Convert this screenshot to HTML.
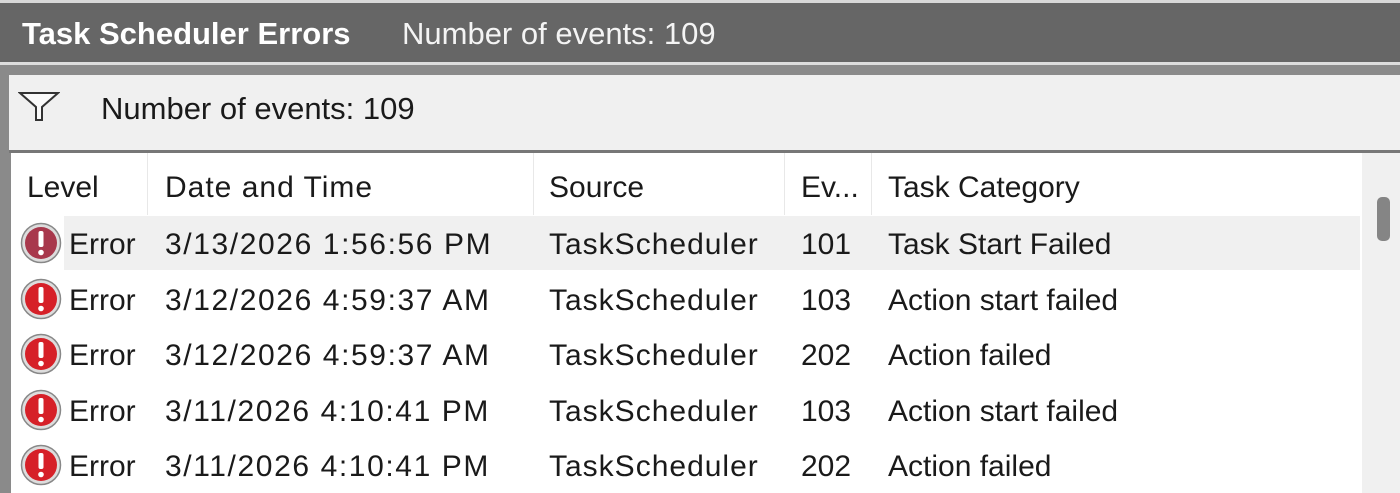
<!DOCTYPE html>
<html><head><style>
body{margin:0;width:1400px;height:493px;overflow:hidden;background:#fff;font-family:"Liberation Sans",sans-serif;position:relative}
.a{position:absolute;white-space:nowrap}
.t{font-size:30px;color:#1a1a1a}
.d{letter-spacing:1.6px}
.s{letter-spacing:1px}
.sep{position:absolute;top:153px;height:62px;width:1px;background:#e8e8e8}
</style></head><body>
<div class="a" style="left:0;top:0;width:1400px;height:3px;background:#d8d8d8"></div>
<div class="a" style="left:0;top:3px;width:1400px;height:59px;background:#666"></div>
<div class="a" style="left:22px;top:16px;font-size:31px;font-weight:bold;color:#fff">Task Scheduler Errors</div>
<div class="a" style="left:402px;top:16px;font-size:31px;color:#f4f4f4">Number of events: 109</div>
<div class="a" style="left:0;top:62px;width:1400px;height:3px;background:#ddd"></div>
<div class="a" style="left:0;top:65px;width:1400px;height:10px;background:#8a8a8a"></div>
<div class="a" style="left:0;top:75px;width:1400px;height:418px;background:#8a8a8a"></div>
<div class="a" style="left:9px;top:75px;width:1391px;height:75px;background:#f0f0f0"></div>
<svg class="a" style="left:18px;top:90px" width="42" height="32" viewBox="0 0 42 32"><path d="M2 3 L40 3 L24 17 L24 30 L18 30 L18 17 Z" fill="#fafafa" stroke="#333" stroke-width="2"/></svg>
<div class="a" style="left:101px;top:91px;font-size:31px;color:#1a1a1a">Number of events: 109</div>
<div class="a" style="left:9px;top:150px;width:1391px;height:3px;background:#777"></div>
<div class="a" style="left:11px;top:153px;width:1389px;height:340px;background:#fff"></div>
<div class="a" style="left:1362px;top:153px;width:38px;height:340px;background:#f0f0f0"></div>
<div class="a" style="left:1377px;top:197px;width:13px;height:44px;background:#858585;border-radius:5px"></div>
<div class="sep" style="left:147px"></div><div class="sep" style="left:533px"></div><div class="sep" style="left:784px"></div><div class="sep" style="left:871px"></div>
<div class="a t" style="left:27px;top:171px">Level</div>
<div class="a t s" style="left:165px;top:171px">Date and Time</div>
<div class="a t" style="left:549px;top:171px">Source</div>
<div class="a t" style="left:801px;top:171px">Ev...</div>
<div class="a t" style="left:888px;top:171px">Task Category</div>
<div class="a" style="left:64px;top:216px;width:1296px;height:54px;background:#f0f0f0"></div>
<div id="rows"></div>
<script>
var d=[["3/13/2026 1:56:56 PM","101","Task Start Failed"],["3/12/2026 4:59:37 AM","103","Action start failed"],["3/12/2026 4:59:37 AM","202","Action failed"],["3/11/2026 4:10:41 PM","103","Action start failed"],["3/11/2026 4:10:41 PM","202","Action failed"]];
var h="";d.forEach(function(r,i){var y=228+i*55.5;var c=i==0?"#a8384c":"#d62028";
h+='<svg class="a" style="left:20px;top:'+(y-6)+'px" width="42" height="42" viewBox="0 0 42 42"><circle cx="21" cy="21" r="19.5" fill="#ddd" stroke="#888" stroke-width="1.5"/><circle cx="21" cy="21" r="16" fill="'+c+'"/><rect x="18.5" y="9" width="5" height="16" rx="2" fill="#fff"/><circle cx="21" cy="30.5" r="2.8" fill="#fff"/></svg>';
h+='<div class="a t" style="left:69px;top:'+y+'px">Error</div><div class="a t d" style="left:165px;top:'+y+'px">'+r[0]+'</div><div class="a t s" style="left:549px;top:'+y+'px">TaskScheduler</div><div class="a t" style="left:801px;top:'+y+'px">'+r[1]+'</div><div class="a t" style="left:888px;top:'+y+'px">'+r[2]+'</div>';});
document.getElementById("rows").innerHTML=h;
</script>
</body></html>
